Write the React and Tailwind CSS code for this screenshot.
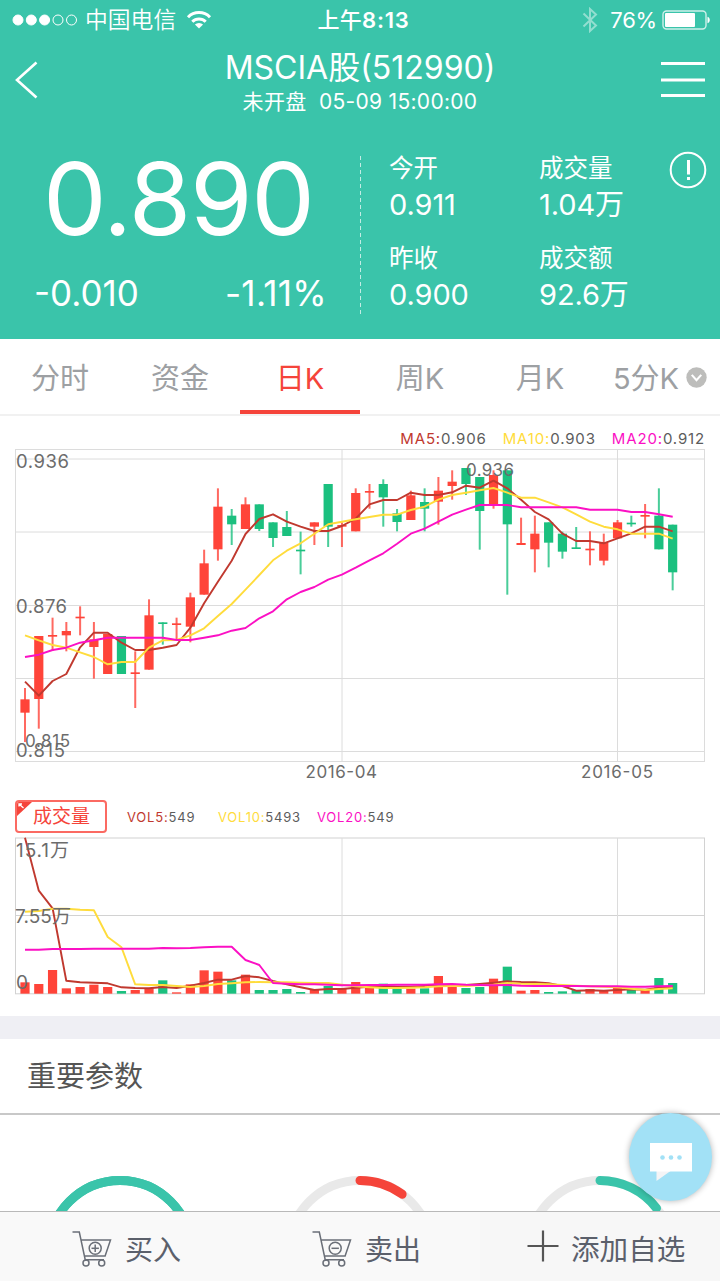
const STEP = 13.78;
const FIRST_X = 25;
const UP = '#ff4439';
const DOWN = '#1bc07f';

// [high, bodyTop, bodyBottom, low, rising], vertical positions in thirds of a pixel
const candles = [
  [774, 808, 848, 936, 1], [618, 618, 807, 896, 1], [563, 615, 620, 663, 1], [576, 603, 616, 664, 1],
  [529, 560, 565, 616, 1], [576, 628, 651, 746, 1], [612, 612, 732, 732, 1], [618, 618, 732, 732, 0],
  [664, 727, 732, 834, 1], [508, 556, 719, 719, 1], [577, 577, 582, 644, 0], [563, 580, 585, 630, 1],
  [488, 502, 590, 637, 1], [359, 400, 494, 494, 1], [175, 230, 358, 392, 1], [237, 257, 283, 345, 0],
  [202, 223, 297, 297, 1], [223, 223, 297, 303, 0], [277, 277, 324, 351, 0], [243, 291, 318, 318, 0],
  [305, 359, 364, 433, 0], [277, 277, 290, 345, 1], [162, 162, 290, 351, 0], [277, 285, 290, 351, 1],
  [175, 189, 304, 304, 1], [162, 183, 188, 236, 1], [148, 162, 202, 290, 0], [237, 250, 276, 304, 0],
  [182, 196, 270, 270, 1], [175, 216, 236, 304, 0], [141, 182, 215, 284, 1], [121, 155, 168, 209, 1],
  [114, 114, 162, 195, 0], [141, 141, 243, 359, 0], [121, 135, 228, 236, 1], [121, 121, 283, 494, 0],
  [263, 339, 345, 345, 1], [257, 311, 358, 427, 1], [277, 277, 338, 412, 0], [305, 311, 365, 386, 0],
  [291, 352, 357, 357, 0], [304, 356, 361, 406, 1], [311, 338, 392, 406, 1], [270, 277, 325, 325, 1],
  [257, 278, 283, 290, 0], [222, 255, 260, 325, 1], [175, 257, 358, 358, 0], [284, 284, 427, 481, 0],
];

const ma5 = [755, 797, 753, 732, 652, 608, 608, 638, 660, 660, 653, 645, 593, 520, 455, 392, 312, 267, 253, 275, 290, 303, 303, 288, 266, 223, 210, 210, 188, 195, 195, 187, 167, 173, 152, 175, 209, 246, 268, 311, 333, 333, 340, 325, 310, 290, 290, 304];
const ma10 = [616, 631, 645, 653, 667, 681, 703, 696, 696, 653, 631, 630, 616, 595, 558, 522, 479, 435, 391, 362, 340, 311, 283, 275, 268, 261, 254, 254, 240, 230, 209, 195, 188, 181, 174, 188, 203, 203, 217, 232, 253, 275, 290, 298, 311, 311, 311, 326];
const ma20 = [681, 674, 660, 653, 638, 631, 623, 623, 623, 623, 623, 630, 630, 623, 616, 602, 594, 565, 544, 508, 486, 471, 449, 434, 413, 391, 370, 341, 311, 296, 275, 254, 239, 225, 225, 225, 232, 232, 232, 232, 232, 239, 239, 239, 246, 246, 253, 260];

const volumes = [577, 582, 540, 595, 591, 584, 591, 603, 600, 595, 571, 607, 583, 541, 545, 571, 554, 600, 600, 597, 606, 600, 588, 597, 576, 594, 581, 597, 596, 595, 558, 590, 594, 591, 566, 530, 602, 600, 606, 604, 600, 597, 602, 594, 600, 600, 564, 579];
const vol5 = [143, 302, 355, 572, 577, 578, 580, 592, 594, 595, 591, 594, 587, 579, 569, 569, 558, 562, 573, 583, 592, 600, 597, 597, 593, 590, 588, 590, 590, 588, 585, 585, 585, 582, 578, 574, 576, 577, 580, 588, 602, 601, 602, 600, 598, 599, 593, 590];
const vol10 = [365, 363, 356, 356, 359, 361, 441, 472, 583, 585, 585, 588, 591, 588, 582, 580, 577, 576, 577, 577, 578, 579, 579, 584, 589, 592, 594, 594, 593, 592, 589, 588, 588, 586, 584, 579, 581, 582, 583, 585, 587, 589, 590, 592, 596, 600, 597, 595];
const vol20 = [479, 479, 477, 477, 477, 476, 476, 476, 476, 476, 474, 475, 474, 472, 470, 470, 510, 525, 579, 581, 583, 583, 584, 586, 586, 585, 585, 584, 584, 584, 583, 582, 584, 585, 586, 585, 587, 588, 588, 588, 588, 589, 589, 589, 590, 590, 589, 588];

const px = (i) => FIRST_X + i * STEP;
const toPoints = (values) => values.map((v, i) => `${px(i).toFixed(1)},${(v / 3).toFixed(1)}`).join(' ');

const tabs = ['分时', '资金', '日K', '周K', '月K', '5分K'];

const stats = [
  { label: '今开', value: '0.911' },
  { label: '成交量', value: '1.04万' },
  { label: '昨收', value: '0.900' },
  { label: '成交额', value: '92.6万' },
];

function Line({ values, color }) {
  return <polyline points={toPoints(values)} fill="none" stroke={color} strokeWidth="1.9" strokeLinejoin="round" />;
}

function StatusBar() {
  return (
    <div className="grid h-10 grid-cols-3 items-center pl-3 pr-[9px] text-[22px]">
      <div className="flex items-center">
        <svg width="66" height="12" viewBox="0 0 66 12" fill="none" stroke="white">
          <circle cx="6" cy="6" r="5" fill="white" />
          <circle cx="19.3" cy="6" r="5" fill="white" />
          <circle cx="32.6" cy="6" r="5" fill="white" />
          <circle cx="46" cy="6" r="5" />
          <circle cx="59.5" cy="6" r="5" />
        </svg>
        <span className="ml-[7px] pt-px text-[22.8px] font-[350]">中国电信</span>
        <svg className="ml-2.5" width="26" height="20" viewBox="0 0 26 20" fill="none" stroke="white" strokeWidth="3">
          <path d="M2 7.2a15.4 15.4 0 0 1 22 0" />
          <path d="M6.3 11.8a9.5 9.5 0 0 1 13.4 0" />
          <path d="M8.9 14.6a5.8 5.8 0 0 1 8.2 0L13 18.6Z" fill="white" stroke="none" />
        </svg>
      </div>
      <div className="pl-1 text-center font-semibold tracking-[0.8px]">
        <span className="font-medium tracking-[0.3px]">上午</span>8:13
      </div>
      <div className="flex items-center justify-end">
        <svg className="mr-3" width="16" height="26" viewBox="0 0 16 26" fill="none" stroke="white" strokeOpacity=".45" strokeWidth="2">
          <path d="M1.500 6.500 14 18.500 8 24V2l6 5.500L1.500 19.500" />
        </svg>
        <span className="mr-[5px] tracking-[-0.2px]">76%</span>
        <svg width="49" height="20" viewBox="0 0 49 20" fill="none">
          <rect x="1" y="1" width="43" height="18" rx="3.5" stroke="white" strokeOpacity=".75" strokeWidth="1.4" />
          <rect x="3" y="3" width="30" height="14" rx="1" fill="white" />
          <path d="M45.5 6.8c3 .8 3 5.600 0 6.400Z" fill="white" />
        </svg>
      </div>
    </div>
  );
}

function NavBar() {
  return (
    <div className="flex h-[90px] items-start justify-between pl-[15px] pr-[15px]">
      <svg className="mt-[21px]" width="24" height="38" viewBox="0 0 24 38" fill="none" stroke="white" strokeWidth="2.6">
        <path d="M21.500 1.500 2 19l19.500 17.500" />
      </svg>
      <div className="flex flex-col items-center pl-5">
        <h1 className="mt-[7px] text-[32px] leading-[42px]">MSCIA股(512990)</h1>
        <p className="text-[21px] leading-[25px] tracking-[0.3px] whitespace-pre">未开盘  05-09 15:00:00</p>
      </div>
      <svg className="mt-[21px]" width="44" height="38" viewBox="0 0 44 38" stroke="white" strokeWidth="3">
        <path d="M0 2.500h44M0 19h44M0 34.500h44" />
      </svg>
    </div>
  );
}

function Quote() {
  return (
    <div className="flex h-[209px]">
      <div className="w-[360px]">
        <div className="mt-[3px] pr-[3px] text-center text-[101px] font-normal leading-[130px] tracking-[-1.200px]">0.890</div>
        <div className="mt-[10px] flex justify-between pl-[34px] pr-[33px] text-[35px] leading-[40px]">
          <span>-0.010</span>
          <span className="tracking-[0.3px]">-1.11%</span>
        </div>
      </div>
      <div className="mt-[26px] h-[158px] w-px bg-[repeating-linear-gradient(to_bottom,#ffffffb0_0_4px,transparent_4px_7px)]" />
      <div className="ml-7 grid w-[280px] grid-cols-[150px_130px] content-start gap-y-4 pt-5">
        {stats.map((s) => (
          <div key={s.label} className="h-[74px]">
            <div className="text-[24.5px] leading-9">{s.label}</div>
            <div className="text-[29px] leading-[38px] tracking-[-0.1px]">{s.value}</div>
          </div>
        ))}
      </div>
      <svg className="mt-[21px]" width="38" height="38" viewBox="0 0 38 38" fill="none" stroke="white" strokeWidth="2">
        <circle cx="19" cy="19" r="17.300" />
        <path d="M19.500 9v14.500" strokeWidth="3" />
        <path d="M19.500 26v3" strokeWidth="3" />
      </svg>
    </div>
  );
}

function Tabs() {
  return (
    <div className="grid h-[77px] shrink-0 grid-cols-6 border-b-2 border-[#f1f1f1] text-[29px] text-[#9da0a3]">
      {tabs.map((tab) => (
        <div
          key={tab}
          className={`flex items-center justify-center border-b-4 pt-2 ${tab === '日K' ? 'border-[#f5443a] text-[#f5443a]' : 'border-transparent'}`}
        >
          {tab}
          {tab === '5分K' && (
            <svg className="ml-[7px] mb-0.5" width="21" height="21" viewBox="0 0 20 20" fill="none">
              <circle cx="10" cy="10" r="9.700" fill="#bdbdbb" />
              <path d="m5.500 7.500 4.500 5 4.500-5" stroke="white" strokeWidth="2" />
            </svg>
          )}
        </div>
      ))}
    </div>
  );
}

function PriceChart() {
  return (
    <svg className="block" width="720" height="360" viewBox="0 0 720 360">
      <g fill="none" stroke="#dcdcdc">
        <rect x="15.500" y="19.500" width="689" height="312" />
        <path d="M15 29h689M15 102h689M15 175.500h689M15 248.500h689M15 321.500h689M342 20v311M617.500 20v311" />
      </g>
      {candles.map(([high, top, bottom, low, rising], i) => (
        <g key={i} fill={rising ? UP : DOWN}>
          <rect x={px(i) - 1} y={high / 3} width="2" height={(low - high) / 3} opacity=".8" />
          <rect x={px(i) - 4.6} y={top / 3} width="9.2" height={(bottom - top) / 3} />
        </g>
      ))}
      <Line values={ma5} color="#c0392f" />
      <Line values={ma10} color="#ffdc3c" />
      <Line values={ma20} color="#fb10c4" />
      <g fill="#6c6c6c" fontSize="18.500">
        <text x="16" y="37.500" textLength="53">0.936</text>
        <text x="16" y="182.500" textLength="51">0.876</text>
        <text x="16" y="326.500" textLength="49">0.815</text>
        <text x="25" y="317" fontSize="17" textLength="45">0.815</text>
        <text x="466" y="46" fontSize="17" textLength="48">0.936</text>
        <text x="305.500" y="348" fontSize="17" textLength="71.500">2016-04</text>
        <text x="581" y="348" fontSize="17" textLength="72">2016-05</text>
      </g>
    </svg>
  );
}

function VolumeChart() {
  return (
    <svg className="block" width="720" height="166" viewBox="0 45 720 166">
      <g fill="none" stroke="#d2d2d2">
        <rect x="15.500" y="48" width="689" height="155.800" />
        <path d="M15 125.500h689" />
        <path d="M342 48v155M617.500 48v155" stroke="#dcdcdc" />
      </g>
      {volumes.map((v, i) => (
        <rect key={i} x={px(i) - 4.6} y={v / 3} width="9.2" height={(611 - v) / 3} fill={candles[i][4] ? UP : DOWN} />
      ))}
      <Line values={vol5} color="#c0392f" />
      <Line values={vol10} color="#ffdc3c" />
      <Line values={vol20} color="#fb10c4" />
      <g fill="#6c6c6c" fontSize="19">
        <text x="16" y="66.500" textLength="53">15.1万</text>
        <text x="15" y="133" textLength="56">7.55万</text>
        <text x="16" y="199">0</text>
      </g>
    </svg>
  );
}

function Gauge({ track, color, dash }) {
  return (
    <div className="flex justify-center">
      <svg className="mt-[59px]" width="156" height="156" viewBox="-78 -78 156 156" fill="none" strokeWidth="9">
        <circle r="71.500" stroke={track} />
        <circle r="71.500" stroke={color} strokeDasharray={dash} strokeLinecap="round" transform="rotate(-90)" />
      </svg>
    </div>
  );
}

function Cart({ plus }) {
  return (
    <svg width="40" height="38" viewBox="0 0 40 38" fill="none" stroke="#6a6f78" strokeWidth="1.500">
      <path d="M.5 2h6.800l6.200 29M9 10h29.500l-5.400 16H12.600M13 29.800h19" />
      <circle cx="23.200" cy="18.300" r="6" />
      <path d="M19.500 18.300h7.400" />
      {plus && <path d="M23.200 14.600V22" />}
      <circle cx="14" cy="33" r="3" />
      <circle cx="29.700" cy="33" r="3" />
    </svg>
  );
}

function Footer() {
  return (
    <div className="grid h-[70px] shrink-0 grid-cols-3 border-t border-[#b9b9b9] bg-[#f9f9f9] text-[28px] text-[#5b606b]">
      <div className="flex items-center pl-[72px] pt-1">
        <Cart plus />
        <span className="ml-[13px] pt-[3px]">买入</span>
      </div>
      <div className="flex items-center pl-[72px] pt-1">
        <Cart />
        <span className="ml-[13px] pt-[3px]">卖出</span>
      </div>
      <div className="flex items-center bg-[#f7f7f7] pl-[47px] pt-1">
        <svg className="mb-[5px]" width="32" height="32" viewBox="0 0 32 32" stroke="#555" strokeWidth="2.200">
          <path d="M.5 16h31M16 .5v31" />
        </svg>
        <span className="ml-3 pt-[3px] text-[28.600px]">添加自选</span>
      </div>
    </div>
  );
}

export default function App() {
  return (
    <div className="relative flex h-[1281px] w-[720px] flex-col overflow-hidden bg-white font-['Inter','Noto_Sans_CJK_SC',sans-serif] font-[390]">
      <header className="h-[339px] shrink-0 bg-[#3ac4aa] font-normal text-white">
        <StatusBar />
        <div className="font-[390]">
          <NavBar />
          <Quote />
        </div>
      </header>
      <Tabs />

      <section className="h-[600px] shrink-0">
        <div className="flex h-[14px] justify-end gap-4 pt-3 pr-[15px] text-[15px] leading-[22px] tracking-[0.85px] text-[#5c5c5c]">
          <span><span className="text-[#c0392f]">MA5:</span>0.906</span>
          <span><span className="text-[#ffdc3c]">MA10:</span>0.903</span>
          <span><span className="text-[#fb10c4]">MA20:</span>0.912</span>
        </div>
        <PriceChart />
        <div className="flex h-[45px] items-center pl-[15px] text-[13px] tracking-[0.8px] text-[#5c5c5c]">
          <div className="relative mt-[7px] mb-[-1px] h-[33px] w-[92px] overflow-hidden rounded border-2 border-[#fb6a62] pl-4 text-[19px] leading-[30px] tracking-normal whitespace-nowrap text-[#f5443a]">
            <svg className="absolute top-0 left-0" width="15" height="14" viewBox="0 0 15 14">
              <path d="M0 0h15L0 14Z" fill="#f5443a" />
              <path d="m2 2 4.500 4M2 4.500V2h3" stroke="white" fill="none" strokeWidth="1.300" />
            </svg>
            成交量
          </div>
          <span className="mt-[10px] ml-5 w-[91px]"><span className="text-[#c0392f]">VOL5:</span>549</span>
          <span className="mt-[10px] w-[99px]"><span className="text-[#ffdc3c]">VOL10:</span>5493</span>
          <span className="mt-[10px]"><span className="text-[#fb10c4]">VOL20:</span>549</span>
        </div>
        <VolumeChart />
      </section>

      <div className="h-[23px] shrink-0 bg-[#efeff4]" />
      <h2 className="h-[76px] shrink-0 border-b-2 border-[#c8c8c8] pl-[27px] text-[29px] leading-[76px] text-[#555]">重要参数</h2>
      <div className="grid min-h-0 flex-1 grid-cols-3 overflow-hidden">
        <Gauge track="#3ac4aa" color="#3ac4aa" dash="450 0" />
        <Gauge track="#e9e9e9" color="#f5443a" dash="45 450" />
        <Gauge track="#e9e9e9" color="#3ac4aa" dash="65 450" />
      </div>
      <Footer />

      {/* floating chat button */}
      <button className="absolute top-[1113px] left-[629px] flex h-[88px] w-[83px] items-center justify-center rounded-[50%] bg-[#a2e1f6] shadow-[0_0_6px_rgba(0,0,0,0.3)]">
        <svg className="mt-2.5" width="42" height="39" viewBox="0 0 42 39">
          <path d="M6.500 28v10l14-10Z" fill="#f4f4f6" />
          <path d="M0 0h42v28.500H0Z" fill="white" />
          <g fill="#a2e1f6">
            <circle cx="12.500" cy="14.500" r="2.300" />
            <circle cx="21" cy="14.500" r="2.300" />
            <circle cx="29.500" cy="14.500" r="2.300" />
          </g>
        </svg>
      </button>
    </div>
  );
}
